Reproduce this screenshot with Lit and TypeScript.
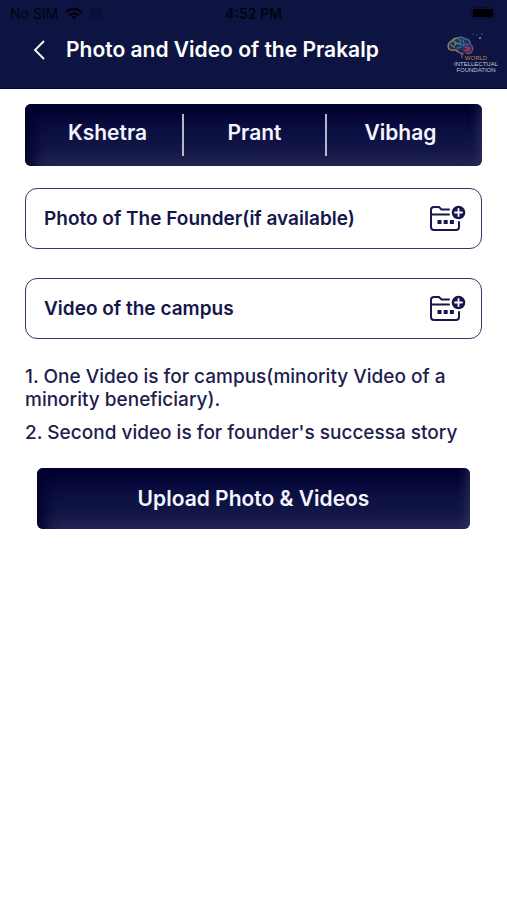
import { LitElement, html, css } from "lit";
import { customElement, property } from "lit/decorators.js";

@customElement("status-bar")
class StatusBar extends LitElement {
  static styles = css`
    :host {
      display: grid;
      grid-template-columns: 1fr auto 1fr;
      align-items: center;
      height: 26px;
      padding: 0 10px;
      font-size: 14px;
      color: #02030f;
    }
    .left {
      display: flex;
      align-items: center;
      gap: 7px;
    }
    .time {
      font-weight: 600;
    }
    .battery {
      justify-self: end;
    }
    svg {
      display: block;
    }
  `;
  render() {
    return html`
      <div class="left">
        <span>No SIM</span>
        <svg width="18" height="13" viewBox="0 0 18 13" fill="none" stroke="currentColor" stroke-width="2.6">
          <path d="M1.2 5.2a11.2 11.2 0 0 1 15.6 0M4.2 8.4a7 7 0 0 1 9.6 0" />
          <path d="M9 12.6 6.4 10.2a3.8 3.8 0 0 1 5.2 0Z" fill="currentColor" stroke="none" />
        </svg>
        <svg width="12" height="12" viewBox="0 0 12 12" stroke="currentColor" stroke-width="1.2" stroke-linecap="round" opacity=".7">
          <path d="M6 1v2.5M6 8.5V11M1 6h2.5M8.5 6H11M2.5 2.5l1.7 1.7M7.8 7.8l1.7 1.7M2.5 9.5l1.7-1.7M7.8 4.2l1.7-1.7" />
        </svg>
      </div>
      <span class="time">4:52 PM</span>
      <svg class="battery" width="26" height="12" viewBox="0 0 26 12">
        <rect x=".5" y=".5" width="22" height="11" rx="3" fill="none" stroke="#090d31" />
        <rect x="2" y="2" width="20" height="8" rx="1.5" fill="#000004" />
        <path d="M24 4v4c1.3-.6 1.3-3.4 0-4" fill="#090d31" />
      </svg>
    `;
  }
}

@customElement("foundation-logo")
class FoundationLogo extends LitElement {
  static styles = css`
    :host {
      display: block;
    }
    svg {
      display: block;
    }
    .name {
      font-family: "Liberation Sans", Arial, sans-serif;
      font-size: 6px;
      text-anchor: middle;
      fill: #c3c7de;
    }
    .world {
      fill: #b5854d;
    }
  `;
  render() {
    return html`
      <svg width="52" height="48" viewBox="0 0 52 48" role="img" aria-label="World Intellectual Foundation">
        <path d="M2 15c-2-4 0-7 3-8 2-3 6-4 10-3 4 0 7 2 8 5 3 3 3 7 1 9-2 3-5 2-7 1l-3-2c-4 1-8 0-12-2Z" fill="#37466f" opacity=".55" />
        <g transform="translate(0 -1)" fill="none" stroke-linecap="round" stroke-width="1.5">
          <path d="M2 17c-2-4 0-7 3-8 2-3 5-3 6-3" stroke="#85845f" />
          <path d="M10 6c3-1 6-1 8 1 3 0 5 2 5 5" stroke="#38699b" />
          <path d="M23 12c3 2 3 5 2 7-1 3-4 3-6 2" stroke="#853e70" />
          <path d="M2 17c2 2 5 1 7 1 2 3 5 2 7 4" stroke="#a66f5b" />
          <path d="M6 9c2 0 3 2 2 4M4 13l3 2M9 11l4 1" stroke="#668469" />
          <path d="M12 7c2 1 2 3 1 5l4 2M16 8l1 4 4 1M10 16l4-1" stroke="#356894" />
          <path d="M18 15l4 1M17 19l4-2M21 20l2-4" stroke="#9b3861" />
          <path d="M12 20c2 1 3 2 3 6" stroke="#4d477e" />
        </g>
        <g fill="#8290b5">
          <circle cx="27" cy="-2" r=".6" />
          <circle cx="30" cy="2" r=".5" />
          <circle cx="33" cy="5" r="1" />
          <circle cx="35" cy="1" r=".6" />
          <circle cx="26" cy="1" r=".5" />
        </g>
        <text class="name world" x="29" y="27">WORLD</text>
        <text class="name" x="29" y="33">INTELLECTUAL</text>
        <text class="name" x="29" y="39">FOUNDATION</text>
      </svg>
    `;
  }
}

@customElement("upload-field")
class UploadField extends LitElement {
  @property() label = "";
  @property() accept = "";

  static styles = css`
    :host {
      display: block;
    }
    .field {
      position: relative;
      display: flex;
      align-items: center;
      justify-content: space-between;
      box-sizing: border-box;
      min-height: 61px;
      padding: 0 15px 0 18px;
      border: 1px solid #37375f;
      border-radius: 12px;
      font-size: 19px;
      font-weight: 600;
      color: #15164a;
      cursor: pointer;
    }
    .file {
      position: absolute;
      inset: 0;
      width: 100%;
      opacity: 0;
      cursor: pointer;
    }
    .icon {
      flex: none;
    }
  `;

  render() {
    return html`
      <label class="field">
        <span>${this.label}</span>
        <svg class="icon" width="37" height="28" viewBox="0 0 37 28" fill="none" stroke="#17174d" stroke-width="2" stroke-linecap="round">
          <path d="M20 4.5h-7.5L10 2H5Q2 2 2 5v17q0 3 3 3h22q3 0 3-3v-5" />
          <path d="M2 9.5h18" />
          <path d="M8.500 15h4v4h-4zM14.700 15h4v4h-4zM20.900 15h4v4h-4z" fill="#17174d" stroke="none" />
          <circle cx="29.500" cy="7.500" r="6.800" fill="#17174d" stroke="none" />
          <path d="M29.500 4v7M26 7.500h7" stroke="#fff" stroke-width="1.800" />
        </svg>
        <input class="file" type="file" accept=${this.accept} />
      </label>
    `;
  }
}

@customElement("app-root")
class AppRoot extends LitElement {
  static styles = css`
    :host {
      display: block;
      min-height: 100vh;
      background: #fff;
      font-family: Inter, "Liberation Sans", sans-serif;
      color: #1d1d4e;
    }
    .top {
      background: #0e1442;
      border-bottom: 1px solid #070a35;
    }
    .bar {
      display: flex;
      align-items: center;
      height: 62px;
      padding: 0 8px 0 26px;
    }
    .back {
      display: grid;
      place-items: center;
      width: 26px;
      height: 32px;
      margin: 0 14px 14px 0;
      padding: 0;
      border: 0;
      background: none;
      color: #fff;
    }
    .title {
      flex: 1;
      margin: 0 0 14px;
      font-size: 21px;
      line-height: 28px;
      font-weight: 600;
      color: #fff;
    }
    foundation-logo svg {
      overflow: visible;
    }
    .panel {
      border: 0;
      border-radius: 6px;
      color: #f4f5ff;
      font-family: inherit;
      font-size: 21px;
      font-weight: 600;
      background: linear-gradient(#00002f, #0a0e40 40%, #131747 75%, #252752);
      box-shadow: inset 12px 4px 16px -4px #00002c, inset -8px -2px 12px -6px #303260;
    }
    .main {
      display: flex;
      flex-direction: column;
      padding: 15px 25px;
    }
    .tabs {
      display: grid;
      grid-template-columns: 11fr 10fr 11fr;
      padding: 10px 0;
    }
    .tab {
      height: 42px;
      padding: 0 0 6px;
      border: 0;
      background: none;
      color: inherit;
      font: inherit;
    }
    .tab + .tab {
      border-left: 2px solid #b4b6cb;
    }
    .tab:first-child {
      padding-left: 8px;
    }
    .tab:last-child {
      padding-right: 8px;
    }
    .fields {
      display: grid;
      gap: 29px;
      margin-top: 22px;
    }
    .notes {
      display: grid;
      gap: 10px;
      margin: 26px 0 24px;
      padding: 0;
      list-style: none;
      font-size: 19px;
      line-height: 23px;
      font-weight: 500;
    }
    .upload {
      min-height: 61px;
      margin: 0 12px;
      padding: 0;
    }
  `;

  render() {
    return html`
      <header class="top">
        <status-bar></status-bar>
        <div class="bar">
          <button class="back" aria-label="Back">
            <svg width="12" height="20" viewBox="0 0 12 20" fill="none" stroke="currentColor" stroke-width="1.8" stroke-linecap="round">
              <path d="M10.5 1.5 2 10l8.5 8.5" />
            </svg>
          </button>
          <h1 class="title">Photo and Video of the Prakalp</h1>
          <foundation-logo></foundation-logo>
        </div>
      </header>
      <main class="main">
        <nav class="panel tabs">
          ${["Kshetra", "Prant", "Vibhag"].map((name) => html`<button class="tab">${name}</button>`)}
        </nav>
        <div class="fields">
          <upload-field label="Photo of The Founder(if available)" accept="image/*"></upload-field>
          <upload-field label="Video of the campus" accept="video/*"></upload-field>
        </div>
        <ul class="notes">
          <li>1. One Video is for campus(minority Video of a minority beneficiary).</li>
          <li>2. Second video is for founder's successa story</li>
        </ul>
        <button class="panel upload">Upload Photo &amp; Videos</button>
      </main>
    `;
  }
}
